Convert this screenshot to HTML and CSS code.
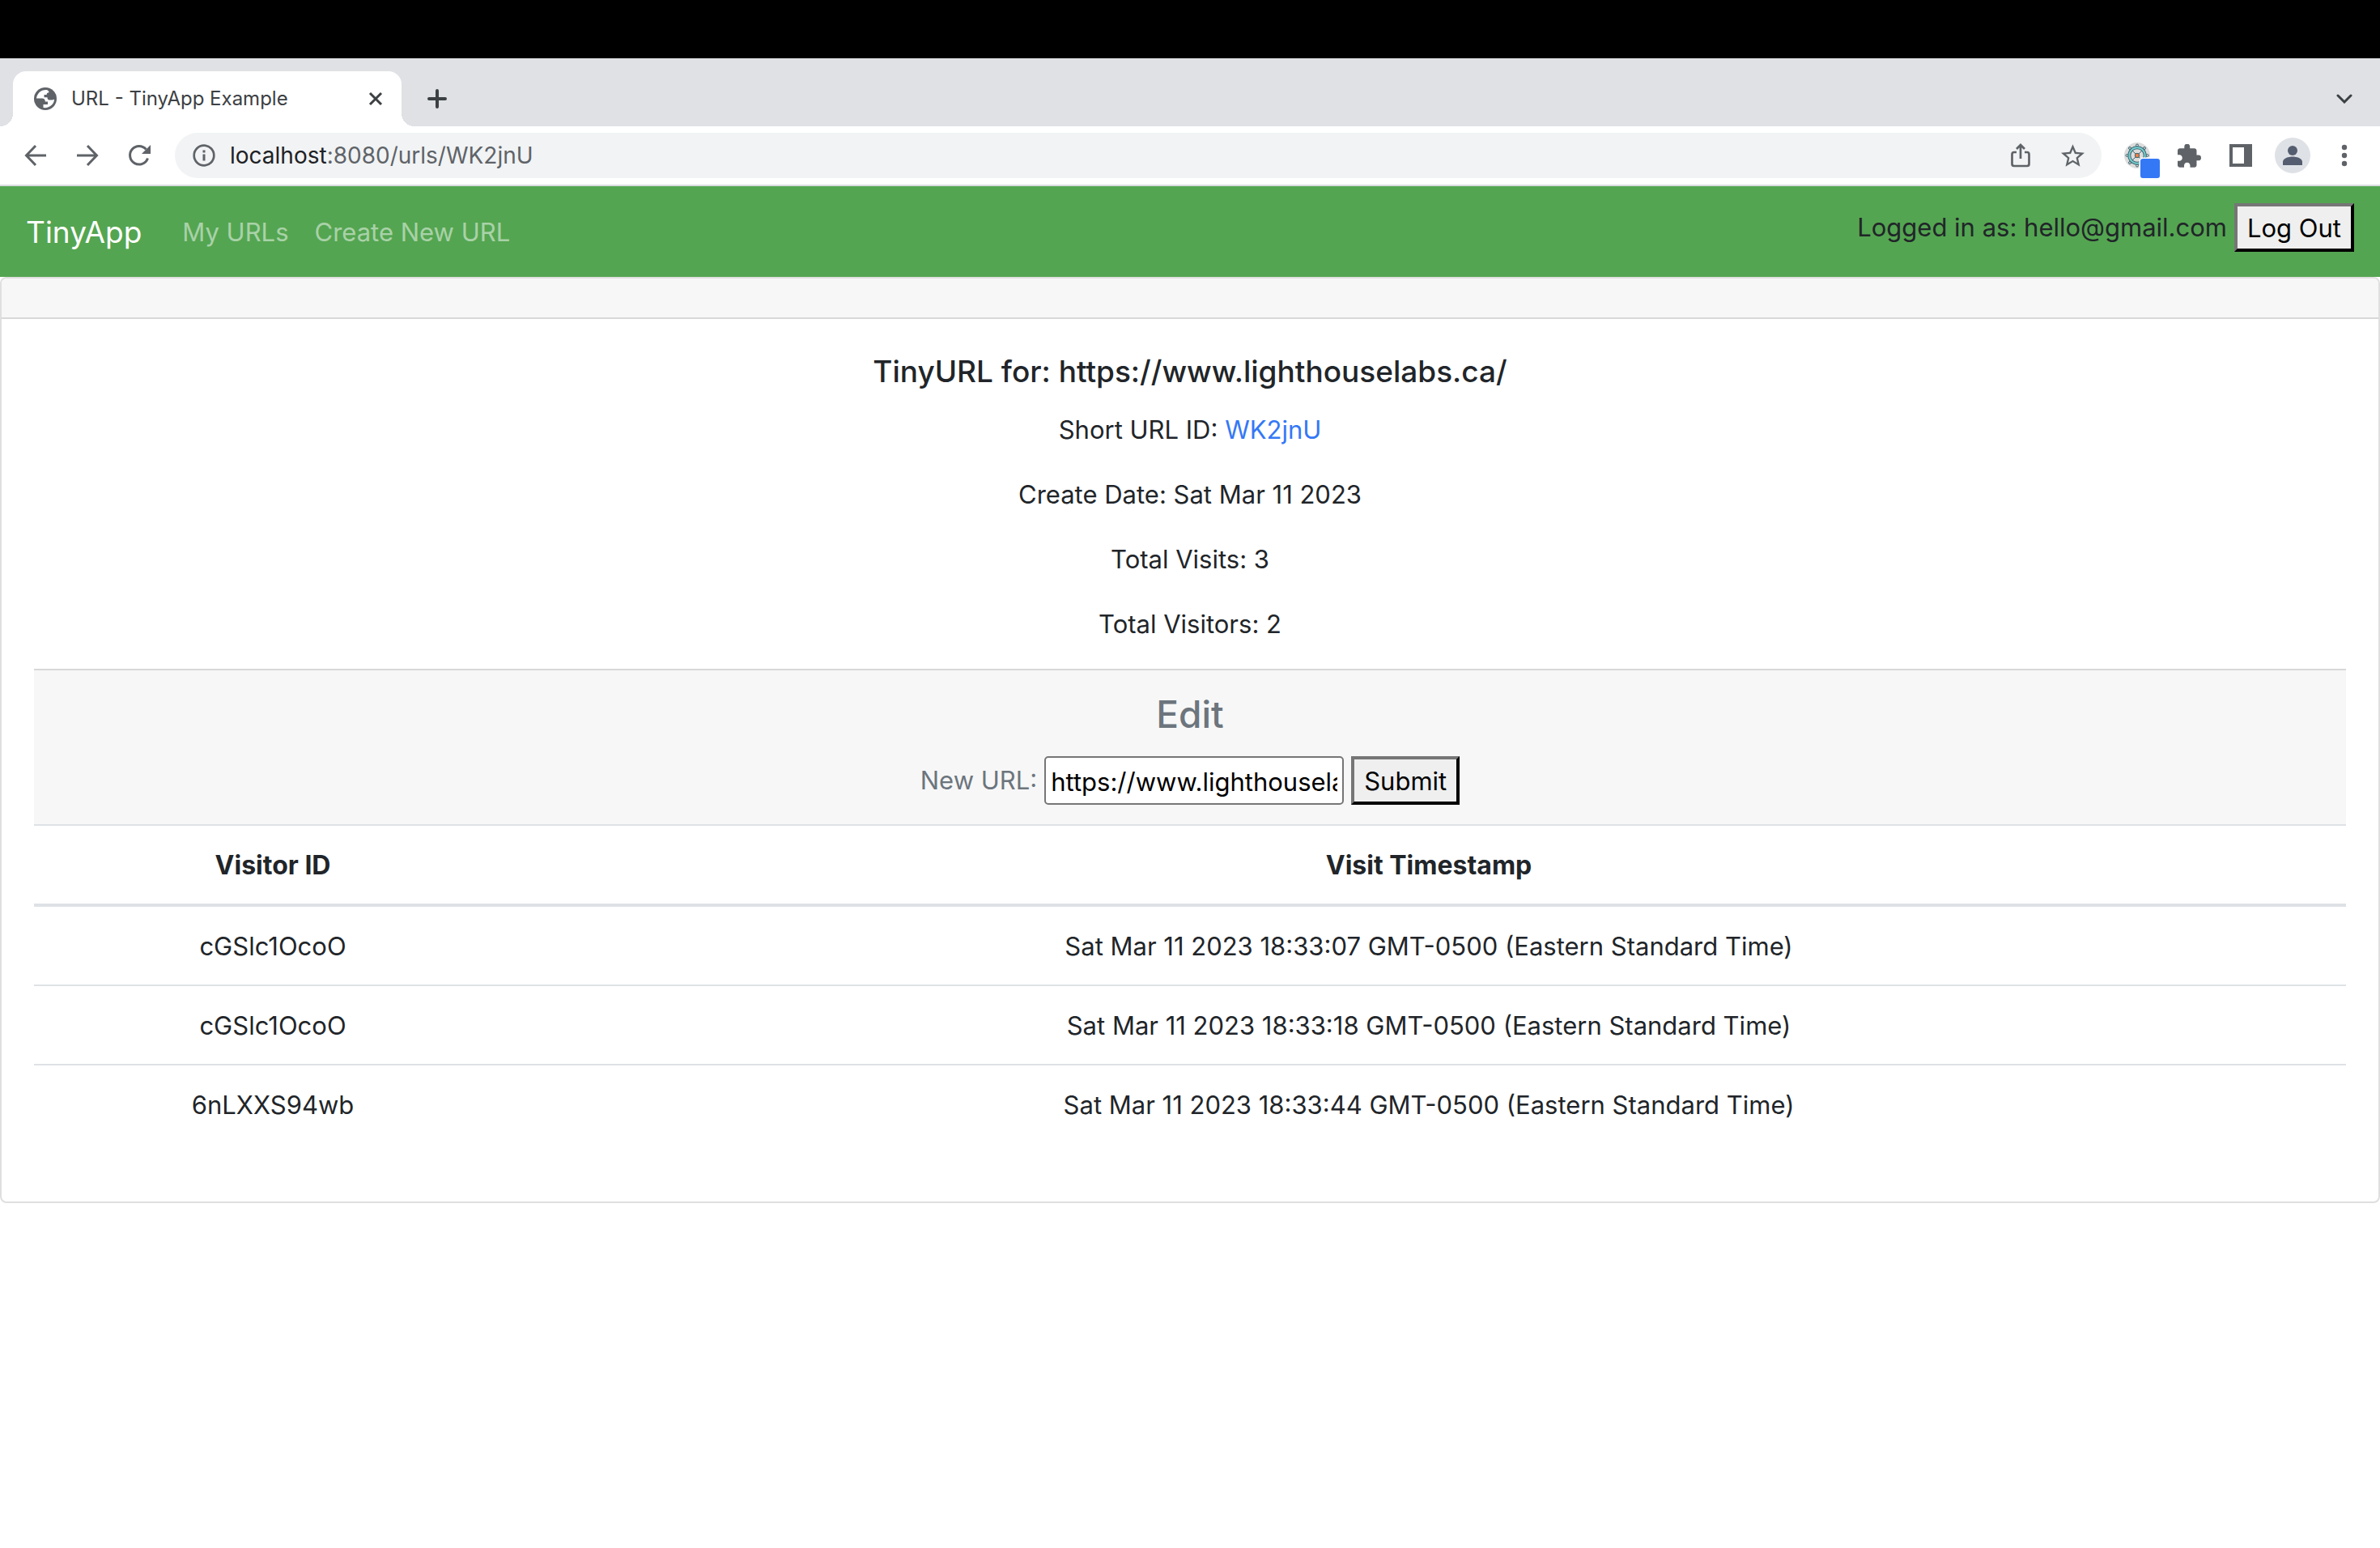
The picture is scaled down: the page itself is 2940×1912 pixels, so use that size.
FILE: index.html
```html
<!DOCTYPE html>
<html lang="en">
<head>
<meta charset="utf-8">
<title>URL - TinyApp Example</title>
<link rel="stylesheet" href="styles.css">
</head>
<body>
<div class="menubar"></div>
<div class="tabstrip">
  <div class="tab">
    <svg class="tab-icon" viewBox="0 0 28 28" width="28" height="28"><circle cx="14" cy="14" r="14" fill="#5f6368"/><path fill="#fff" d="M15.500 3C9 2.500 3.500 7.500 3 13.500h7c2.500 0 3.800 1.500 3.800 4h3.200v3.500h-5.500V25c7 1 13.500-4 13.500-10.500-1 .800-2 1-3.500 1h-3c-1.500-.500-2-1.500-2-3.200h-4V9h3.200c0-2 .800-2.500 2.800-2.700C18.500 5 17.500 3.300 15.500 3z"/></svg>
    <span class="tab-title">URL - TinyApp Example</span>
    <button class="tab-close" aria-label="Close tab"><svg viewBox="0 0 18 18" width="18" height="18"><path d="M2 2l14 14M16 2L2 16" stroke="#3c4043" stroke-width="3" fill="none"/></svg></button>
  </div>
  <button class="icon-btn" aria-label="New tab"><svg viewBox="0 0 24 24" width="24" height="24"><path d="M12 2v20M2 12h20" stroke="#3c4043" stroke-width="4" stroke-linecap="round" fill="none"/></svg></button>
  <button class="icon-btn tab-search" aria-label="Search tabs"><svg viewBox="0 0 20 12" width="20" height="12"><path d="M2 2l8 8 8-8" stroke="#3c4043" stroke-width="3" stroke-linecap="round" fill="none"/></svg></button>
</div>
<div class="toolbar">
  <button class="icon-btn" aria-label="Back"><svg viewBox="0 0 28 28" width="28" height="28"><path d="M27 14H3M14 2L2.500 14 14 26" stroke="#5f6368" stroke-width="3" fill="none"/></svg></button>
  <button class="icon-btn" aria-label="Forward"><svg viewBox="0 0 28 28" width="28" height="28"><path d="M1 14h24M14 2l11.500 12L14 26" stroke="#5f6368" stroke-width="3" fill="none"/></svg></button>
  <button class="icon-btn" aria-label="Reload"><svg viewBox="0 0 28 28" width="28" height="28"><path d="M24.500 17.500A11.300 11.300 0 1 1 22.500 6.500" stroke="#5f6368" stroke-width="3" fill="none"/><path d="M28 1v11H17z" fill="#5f6368"/></svg></button>
  <div class="omnibox">
    <svg class="info" viewBox="0 0 28 28" width="28" height="28"><circle cx="14" cy="14" r="12.300" fill="none" stroke="#5f6368" stroke-width="2.700"/><path d="M14 12.500v8M14 7.500v3" stroke="#5f6368" stroke-width="3"/></svg>
    <span class="address"><span class="host">localhost</span>:8080/urls/WK2jnU</span>
    <button class="icon-btn" aria-label="Share"><svg viewBox="0 0 28 32" width="28" height="32"><path d="M9 12H6a2.500 2.500 0 0 0-2.500 2.500v12A2.500 2.500 0 0 0 6 29h16a2.500 2.500 0 0 0 2.500-2.500v-12A2.500 2.500 0 0 0 22 12h-3M14 20V3M9 8l5-5 5 5" stroke="#5f6368" stroke-width="2.700" fill="none"/></svg></button>
    <button class="icon-btn" aria-label="Bookmark"><svg viewBox="2 2 20 19" width="29" height="28"><path fill="#5f6368" d="M22 9.240l-7.190-.620L12 2 9.190 8.630 2 9.240l5.460 4.730L5.820 21 12 17.270 18.180 21l-1.630-7.030L22 9.240zM12 15.400l-3.760 2.270 1-4.280-3.320-2.880 4.380-.380L12 6.100l1.710 4.040 4.380.380-3.320 2.880 1 4.280L12 15.400z"/></svg></button>
  </div>
  <button class="icon-btn" aria-label="Extension"><svg viewBox="0 0 64 56" width="64" height="56"><circle cx="32" cy="28" r="16" fill="#dcdcdc"/><g stroke="#3f6670" stroke-width="1" fill="none"><path d="M32 14v5M32 37v5M18 28h5M41 28h5M25 21l14 14M39 21L25 35"/><g fill="#dcdcdc"><circle cx="32" cy="15.500" r="1.500"/><circle cx="32" cy="40.500" r="1.500"/><circle cx="19.500" cy="28" r="1.500"/><circle cx="44.500" cy="28" r="1.500"/><circle cx="23" cy="19" r="1.500"/><circle cx="41" cy="19" r="1.500"/><circle cx="23" cy="37" r="1.500"/></g><circle cx="32" cy="28" r="9.700" stroke-width="4"/><circle cx="32" cy="28" r="9.700" stroke="#76cfd0" stroke-width="2"/></g><circle cx="32" cy="28" r="2.700" fill="#ee7f43" stroke="#3f6670"/><rect x="34.500" y="30.500" width="27" height="27" rx="4" fill="#fff"/><rect x="36" y="32" width="24" height="24" rx="3" fill="#3478f6"/></svg></button>
  <button class="icon-btn" aria-label="Extensions"><svg viewBox="2 1.500 21 20.500" width="29" height="29"><path fill="#5f6368" d="M20.500 11H19V7c0-1.100-.900-2-2-2h-4V3.500a2.500 2.500 0 0 0-5 0V5H4c-1.100 0-1.990.900-1.990 2v3.800H3.500c1.490 0 2.700 1.210 2.700 2.700s-1.210 2.700-2.700 2.700H2V20c0 1.100.900 2 2 2h3.800v-1.500c0-1.490 1.210-2.700 2.700-2.700s2.700 1.210 2.700 2.700V22H17c1.100 0 2-.900 2-2v-4h1.500a2.500 2.500 0 0 0 0-5z"/></svg></button>
  <button class="icon-btn" aria-label="Side panel"><svg viewBox="0 0 28 28" width="28" height="28"><path fill="#5f6368" fill-rule="evenodd" d="M0 0h28v28H0zM4 4v20h14V4z"/></svg></button>
  <button class="icon-btn" aria-label="Profile"><svg viewBox="0 0 44 44" width="44" height="44"><circle cx="22" cy="22" r="22" fill="#dee1e6"/><circle cx="22" cy="16" r="6" fill="#555e70"/><path fill="#555e70" d="M10 34v-4c0-4.500 7-6.500 12-6.500S34 25.500 34 30v4z"/></svg></button>
  <button class="icon-btn" aria-label="Menu"><svg viewBox="0 0 8 28" width="8" height="28"><g fill="#5f6368"><circle cx="4" cy="4" r="3.200"/><circle cx="4" cy="14" r="3.200"/><circle cx="4" cy="24" r="3.200"/></g></svg></button>
</div>
<nav class="navbar">
  <a class="brand" href="#">TinyApp</a>
  <a class="nav-link" href="#">My URLs</a>
  <a class="nav-link" href="#">Create New URL</a>
  <form class="logout">
    <span>Logged in as: hello@gmail.com</span>
    <button class="btn" type="button">Log Out</button>
  </form>
</nav>
<main class="card">
  <div class="card-header"></div>
  <div class="card-body">
    <h5 class="title">TinyURL for: https://www.lighthouselabs.ca/</h5>
    <p>Short URL ID: <a class="link" href="#">WK2jnU</a></p>
    <p>Create Date: Sat Mar 11 2023</p>
    <p>Total Visits: 3</p>
    <p>Total Visitors: 2</p>
    <section class="edit">
      <h4 class="edit-title">Edit</h4>
      <form class="edit-form">
        <label for="new-url">New URL:</label>
        <input class="field" id="new-url" type="text" value="https://www.lighthouselabs.ca/">
        <button class="btn" type="button">Submit</button>
      </form>
    </section>
    <table class="visits">
      <thead><tr><th class="visitor" scope="col">Visitor ID</th><th scope="col">Visit Timestamp</th></tr></thead>
      <tbody>
        <tr><td>cGSlc1OcoO</td><td>Sat Mar 11 2023 18:33:07 GMT-0500 (Eastern Standard Time)</td></tr>
        <tr><td>cGSlc1OcoO</td><td>Sat Mar 11 2023 18:33:18 GMT-0500 (Eastern Standard Time)</td></tr>
        <tr><td>6nLXXS94wb</td><td>Sat Mar 11 2023 18:33:44 GMT-0500 (Eastern Standard Time)</td></tr>
      </tbody>
    </table>
  </div>
</main>
</body>
</html>
```
FILE: styles.css
```css
* { box-sizing: border-box; }
body {
  margin: 0;
  background: #fff;
  color: #212529;
  font: 31px/50px Inter, "Liberation Sans", sans-serif;
}
h4, h5, p { margin: 0; }
a { text-decoration: none; }
svg { display: block; flex: none; }

.menubar { height: 72px; background: #000; }

.tabstrip {
  display: flex;
  height: 84px;
  padding: 16px 12px 0 16px;
  background: #dfe1e5;
}
.tab {
  position: relative;
  display: flex;
  align-items: center;
  width: 480px;
  padding: 0 20px 0 26px;
  border-radius: 16px 16px 0 0;
  background: #fff;
  color: #3c4043;
  font-size: 24px;
}
.tab::before, .tab::after {
  content: "";
  position: absolute;
  bottom: 0;
  width: 16px;
  height: 16px;
}
.tab::before { left: -16px; background: radial-gradient(circle at 0 0, #dfe1e5 16px, #fff 16px); }
.tab::after { right: -16px; background: radial-gradient(circle at 100% 0, #dfe1e5 16px, #fff 16px); }
.tab-title { flex: 1; margin-left: 18px; }
.tab-close { padding: 3px; border: 0; background: none; }
.icon-btn {
  display: flex;
  flex: none;
  align-items: center;
  justify-content: center;
  width: 64px;
  height: 56px;
  padding: 0;
  border: 0;
  background: none;
}
.tabstrip .icon-btn { height: 68px; margin-left: 12px; }
.tabstrip .tab-search { margin-left: auto; }

.toolbar {
  display: flex;
  align-items: center;
  height: 74px;
  padding: 0 12px;
  border-bottom: 2px solid #dadce0;
}
.omnibox {
  display: flex;
  flex: 1;
  align-items: center;
  height: 56px;
  margin: 0 12px;
  padding: 0 4px 0 22px;
  border-radius: 28px;
  background: #f1f3f4;
}
.address { flex: 1; margin-left: 18px; color: #5f6368; font-size: 28px; }
.host { color: #202124; }

.navbar {
  display: flex;
  align-items: center;
  height: 112px;
  padding: 2px 32px 0;
  background: #54a551;
}
.brand { margin-right: 34px; color: #fff; font-size: 37px; }
.nav-link { padding: 0 16px; color: rgba(255, 255, 255, 0.5); }
.logout {
  display: flex;
  align-items: center;
  gap: 9px;
  margin: 0 0 12px auto;
}
.btn {
  height: 60px;
  padding: 2px 12px 0;
  border: 4px outset #767676;
  border-color: #767676 #212121 #212121 #767676;
  background: #efefef;
  color: #000;
  font: inherit;
}

.card { border: 2px solid #dfdfdf; border-radius: 8px; }
.card-header {
  height: 50px;
  border-bottom: 2px solid #d8d8d8;
  border-radius: 6px 6px 0 0;
  background: #f7f7f7;
}
.card-body { padding: 40px; text-align: center; }
.card-body p { margin-bottom: 30px; }
.title { margin-bottom: 22px; font-size: 37px; font-weight: 500; }
.link { color: #3478f6; }

.edit {
  padding: 24px;
  border-top: 2px solid #d8d8d8;
  background: #f7f7f7;
  color: #6c757d;
}
.edit-title { margin-bottom: 22px; font-size: 46px; font-weight: 500; line-height: 60px; }
.edit-form {
  display: flex;
  align-items: center;
  justify-content: center;
  gap: 9px;
}
.field {
  width: 370px;
  height: 60px;
  padding: 2px 6px 0;
  border: 2px solid #767676;
  border-radius: 5px;
  background: #fff;
  color: #000;
  font: inherit;
}

.visits { width: 100%; margin-bottom: 32px; border-spacing: 0; }
.visits th, .visits td { padding: 24px 24px 22px; }
.visits th {
  border-top: 2px solid #dee2e6;
  border-bottom: 4px solid #dee2e6;
  font-size: 32px;
  font-weight: 700;
}
.visits td { border-bottom: 2px solid #dee2e6; }
.visits tr:last-child td { border-bottom: 0; }
.visits .visitor { width: 20.66%; }
```
